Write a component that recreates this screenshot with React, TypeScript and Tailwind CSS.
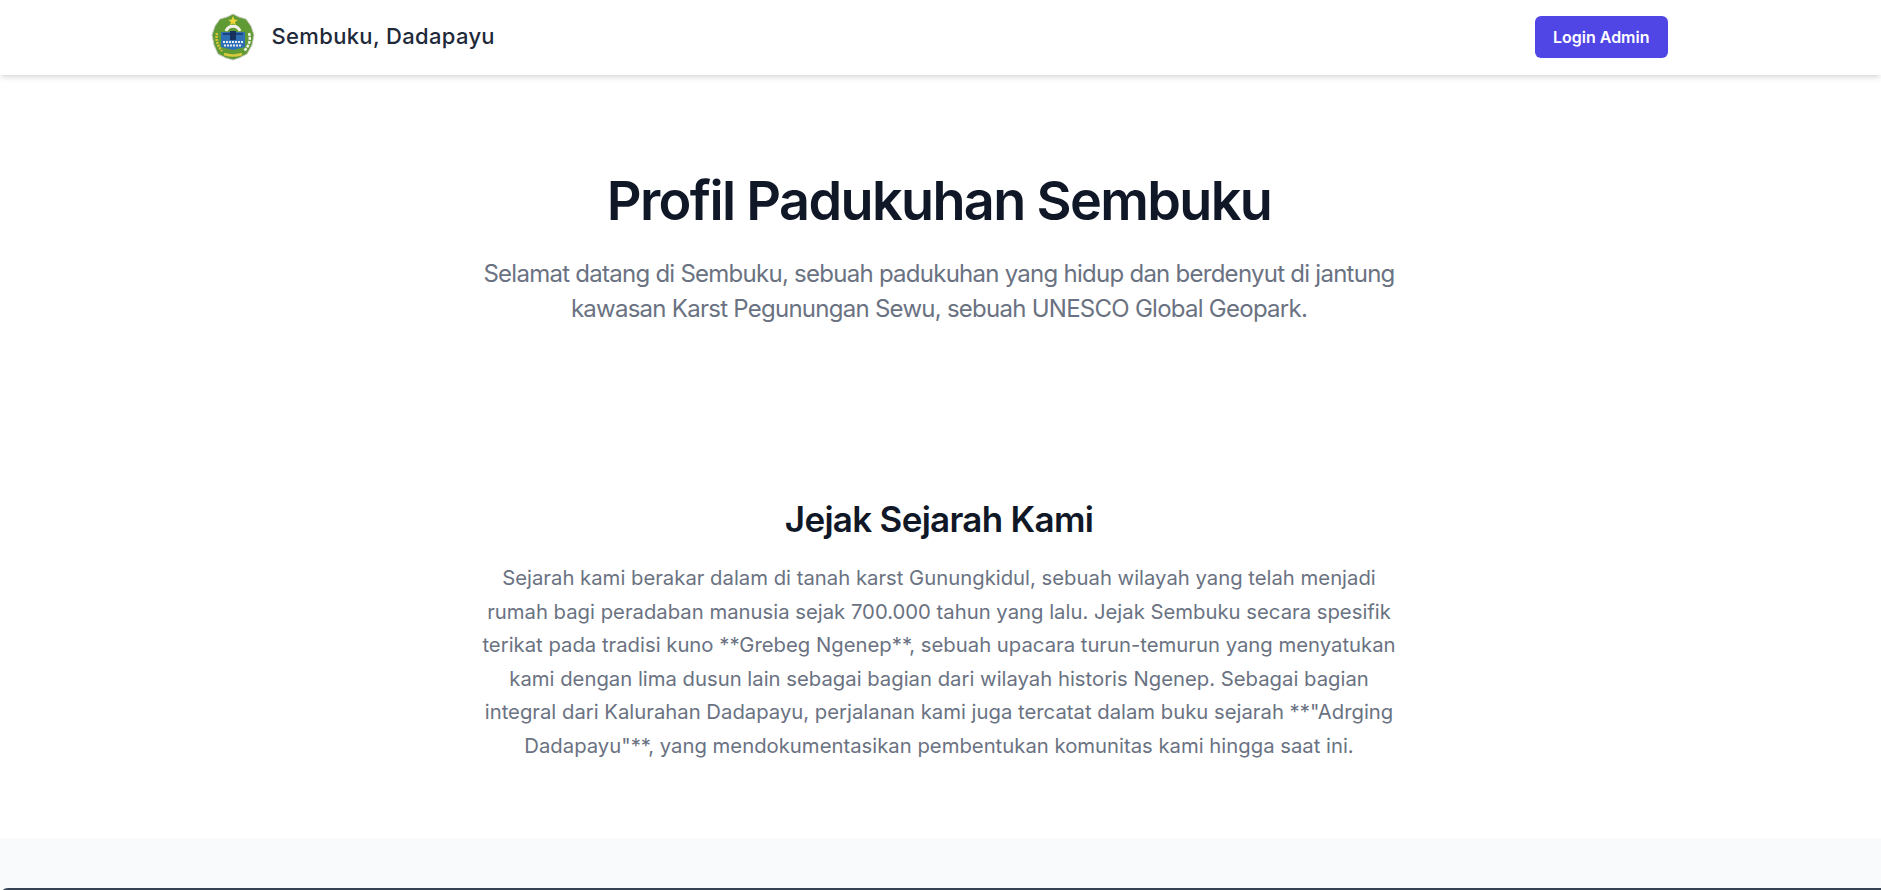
const paragraph =
  'Sejarah kami berakar dalam di tanah karst Gunungkidul, sebuah wilayah yang telah menjadi rumah bagi peradaban manusia sejak 700.000 tahun yang lalu. Jejak Sembuku secara spesifik terikat pada tradisi kuno **Grebeg Ngenep**, sebuah upacara turun-temurun yang menyatukan kami dengan lima dusun lain sebagai bagian dari wilayah historis Ngenep. Sebagai bagian integral dari Kalurahan Dadapayu, perjalanan kami juga tercatat dalam buku sejarah **"Adrging Dadapayu"**, yang mendokumentasikan pembentukan komunitas kami hingga saat ini.';

function Logo() {
  return (
    <svg viewBox="0 0 44 48" className="-ml-[2px] h-[48px] w-[44px]">
      <path d="M22 1 L28 4 L35 6 L40 13 L43 22 L41 32 L36 41 L28 45 L22 47 L15 45 L7 41 L3 32 L1 22 L4 13 L9 6 L16 4 Z" fill="#5f9a35" stroke="#c9ccc0" strokeWidth="1" />
      <path d="M22 3 L23.5 6.5 L27 7 L24 9 L25 12 L22 10.5 L19 12 L20 9 L17 7 L20.5 6.5 Z" fill="#ead53a" />
      <path d="M15 18 A7.5 7.5 0 0 1 29 18" fill="none" stroke="#f2f2ea" strokeWidth="3" />
      <path d="M10 19 L34 19 L34 34 L22 37 L10 34 Z" fill="#2f6fb5" />
      <rect x="19" y="18" width="6" height="9" fill="#16315f" />
      <path d="M12 21 H32" stroke="#16315f" strokeWidth="1.4" />
      <path d="M12 29 H32 M13 32.5 H31" stroke="#e6edf2" strokeWidth="1.8" strokeDasharray="2 1" />
      <path d="M6 20 Q4 30 11 38" fill="none" stroke="#d8c53a" strokeWidth="2.5" strokeDasharray="2 1" />
      <path d="M38 20 Q41 30 33 38" fill="none" stroke="#f3f3ea" strokeWidth="2.5" strokeDasharray="3 1" />
      <path d="M13 41 Q22 44 31 41" fill="none" stroke="#d9c83f" strokeWidth="2.5" />
    </svg>
  );
}

export default function App() {
  return (
    <div className="min-h-screen bg-white font-['Inter','Noto_Sans',sans-serif]">
      <nav className="relative z-10 bg-white shadow-md">
        <div className="mx-auto flex h-[75px] max-w-[1536px] items-center justify-between pr-[41px] pb-[2px] pl-10">
          <div className="flex items-center gap-[17px]">
            <Logo />
            <span className="text-[22px] font-medium tracking-[0.34px] text-gray-800">Sembuku, Dadapayu</span>
          </div>
          <a className="rounded-md bg-[#4f46e5] px-[18px] py-[9px] text-[16px] font-semibold text-white">Login Admin</a>
        </div>
      </nav>

      <main>
        <section className="pt-[96px] pr-[19px] pb-[101px] pl-4 text-center">
          <h1 className="text-[54px] leading-[60px] font-semibold tracking-[-1.65px] text-gray-900">Profil Padukuhan Sembuku</h1>
          <p className="mx-auto mt-[26px] max-w-[922px] text-[24px] leading-[34.5px] tracking-[-0.74px] text-gray-500">
            Selamat datang di Sembuku, sebuah padukuhan yang hidup dan berdenyut di jantung kawasan Karst Pegunungan Sewu, sebuah UNESCO Global Geopark.
          </p>
        </section>

        <section className="pt-[72px] pr-[19px] pb-[75px] pl-4 text-center">
          <h2 className="text-[35px] leading-[40px] font-semibold tracking-[-0.7px] text-gray-900">Jejak Sejarah Kami</h2>
          <p className="mx-auto mt-[22px] max-w-[922px] text-[20.3px] leading-[33.6px] text-gray-500">{paragraph}</p>
        </section>

        <section className="h-[50px] bg-gray-50" />
      </main>

      <footer className="h-[80px] rounded-tl-[8px] bg-gray-700" />
    </div>
  );
}
